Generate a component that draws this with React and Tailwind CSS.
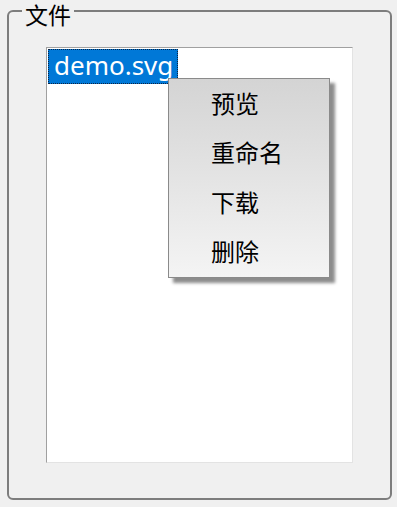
export default function App() {
  const items = ["预览", "重命名", "下载", "删除"];
  return (
    <div
      className="relative w-[397px] h-[507px] bg-[#f0f0f0] pt-[10px] pl-[7px] overflow-hidden"
      style={{ fontFamily: '"Noto Sans", "Noto Sans CJK SC", sans-serif' }}
    >
      <div className="relative w-[385px] h-[490px] border-2 border-[#7d7d7d] rounded-[6px] pl-[37px] pt-[35px]">
        <div className="absolute left-[13px] top-[-12px] px-[3px] bg-[#f0f0f0] text-[23px] leading-[30px] text-black">
          文件
        </div>
        <div className="w-[307px] h-[416px] bg-white border border-t-[#a0a0a0] border-l-[#a0a0a0] border-r-[#e3e3e3] border-b-[#e3e3e3] p-[1px]">
          <div className="w-[130px] h-[35px] bg-[#0078d7] border border-dotted border-[#0b2545] text-white text-[26px] leading-[31px] pl-[5px] whitespace-nowrap">
            demo.svg
          </div>
        </div>
      </div>
      <div className="absolute left-[168px] top-[78px] w-[162px] h-[200px] border border-[#8a8a8a] bg-gradient-to-b from-[#d4d4d4] to-[#f4f4f4] shadow-[5px_5px_3px_rgba(0,0,0,0.45)] flex flex-col">
        {items.map((t) => (
          <div key={t} className="h-[50px] flex items-center pl-[42px] text-[24px] text-black">
            {t}
          </div>
        ))}
      </div>
    </div>
  );
}
